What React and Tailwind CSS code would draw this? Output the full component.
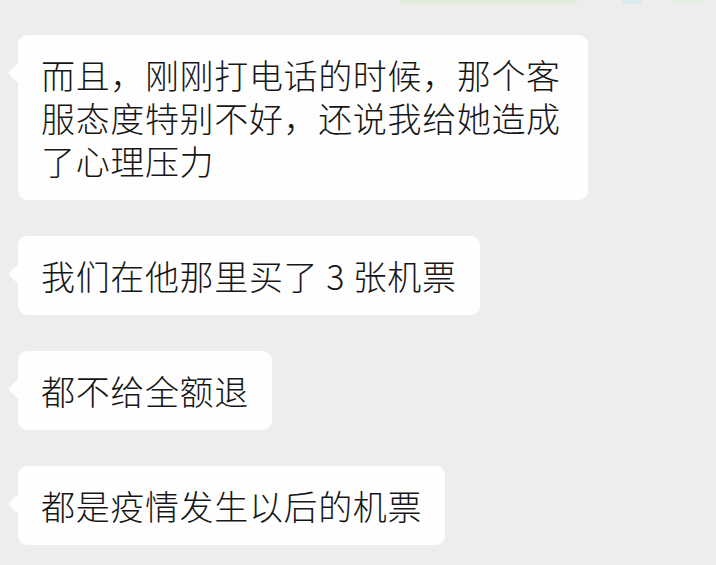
import React from 'react';

const messages = [
  '而且，刚刚打电话的时候，那个客服态度特别不好，还说我给她造成了心理压力',
  '我们在他那里买了 3\u2009张机票',
  '都不给全额退',
  '都是疫情发生以后的机票',
];

function Bubble({ text }) {
  return (
    <div className="relative self-start max-w-[570px] rounded-[9px] bg-[#fefefe] pl-[23px] pr-[23px] py-[18px]">
      {/* little tail pointing at the avatar */}
      <span className="absolute left-[-7px] top-[31px] h-[14px] w-[14px] rotate-45 rounded-[2px] bg-[#fefefe]" />
      <p className="relative text-[34px] font-light leading-[43px] tracking-[0.65px] text-[#161616]">{text}</p>
    </div>
  );
}

export default function App() {
  return (
    <div
      className="w-[716px] h-[565px] overflow-hidden bg-[#ededed] flex flex-col"
      style={{ fontFamily: '"Noto Sans CJK SC", "Noto Sans", sans-serif' }}
    >
      {/* edge of the previous message, cut off at the top */}
      <div className="flex h-[4px] shrink-0">
        <div className="ml-[400px] w-[177px] bg-[#e2eedb]" />
        <div className="ml-[45px] w-[20px] bg-[#dcecee]" />
        <div className="ml-[30px] w-[30px] bg-[#e4eede]" />
      </div>
      <div className="flex flex-col gap-[36px] pl-[18px] pt-[31px]">
        {messages.map((m, i) => (
          <Bubble key={i} text={m} />
        ))}
      </div>
    </div>
  );
}
